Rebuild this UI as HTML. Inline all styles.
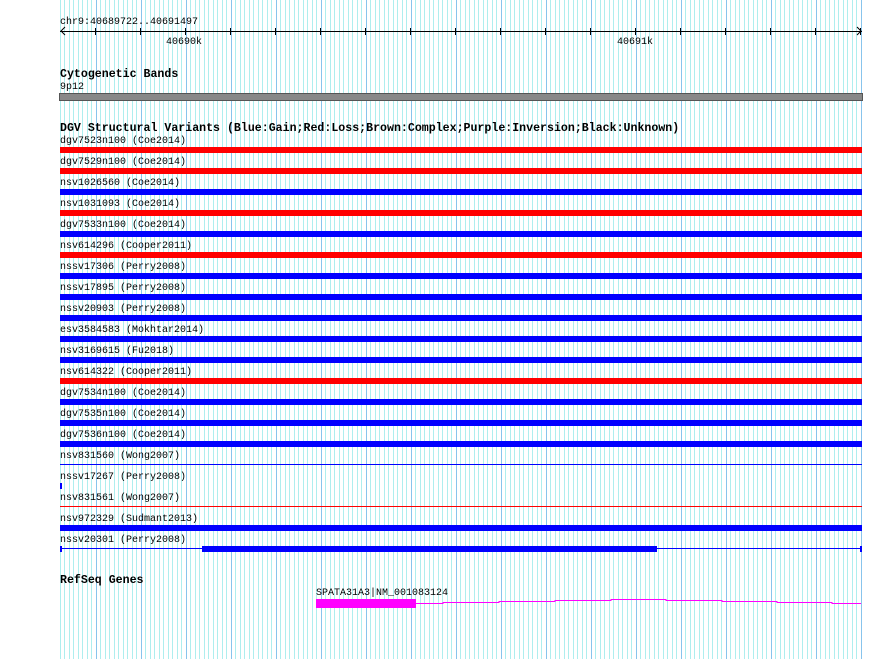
<!DOCTYPE html>
<html><head><meta charset="utf-8"><style>
body{margin:0;width:890px;height:659px;background:#fff;position:relative;overflow:hidden;font-family:"Liberation Mono","DejaVu Sans Mono",monospace;}
.t{position:absolute;font-size:10px;line-height:12px;color:#000;white-space:pre;}
.h{position:absolute;font-size:11.6px;line-height:12px;font-weight:bold;color:#000;white-space:pre;}
.b{position:absolute;left:60px;width:802px;height:6px;}
svg{position:absolute;left:0;top:0;}
</style></head><body>
<svg id="g" width="890" height="659"></svg>
<div class="t" style="left:60px;top:17px">chr9:40689722..40691497</div>
<div class="t" style="left:166px;top:37px">40690k</div>
<div class="t" style="left:617px;top:37px">40691k</div>
<div class="h" style="left:60px;top:69px">Cytogenetic Bands</div>
<div class="t" style="left:60px;top:82px">9p12</div>
<div style="position:absolute;left:59px;top:93px;width:802px;height:6px;background:#888;border:1px solid #555"></div>
<div class="h" style="left:60px;top:123px">DGV Structural Variants (Blue:Gain;Red:Loss;Brown:Complex;Purple:Inversion;Black:Unknown)</div>
<div id="rows"></div>
<div class="h" style="left:60px;top:575px">RefSeq Genes</div>
<div class="t" style="left:316px;top:588px">SPATA31A3|NM_001083124</div>
<div style="position:absolute;left:316px;top:599px;width:100px;height:9px;background:#f0f"></div>
<svg width="890" height="659"><polyline fill="none" stroke="#f0f" stroke-width="1" points="415,603.5 443,603.5 443,602.5 499,602.5 499,601.5 555,601.5 555,600.5 611,600.5 611,599.5 666,599.5 666,600.5 722,600.5 722,601.5 777,601.5 777,602.5 832,602.5 832,603.5 861,603.5"/></svg>
<script>
var s=document.getElementById('g'),h='';
for(var k=0;k<=178;k++){var x=Math.round(59.5+4.5*k);var maj=(k-8)%10==0&&k>=8;
h+='<rect x="'+x+'" y="0" width="1" height="659" fill="'+(maj?'#88c4ec':'#aeeeee')+'"/>';}
h+='<rect x="60" y="31" width="802" height="1" fill="#000"/>';
h+='<polyline points="65,27 61,31 65,35" fill="none" stroke="#000"/><polyline points="857,27 861,31 857,35" fill="none" stroke="#000"/>';
for(var k=0;k<18;k++){var x=95+45*k;h+='<rect x="'+x+'" y="28" width="1" height="7" fill="#000"/>';}
s.innerHTML=h;
var R=[["dgv7523n100 (Coe2014)","r"],["dgv7529n100 (Coe2014)","r"],["nsv1026560 (Coe2014)","b"],["nsv1031093 (Coe2014)","r"],["dgv7533n100 (Coe2014)","b"],["nsv614296 (Cooper2011)","r"],["nssv17306 (Perry2008)","b"],["nssv17895 (Perry2008)","b"],["nssv20903 (Perry2008)","b"],["esv3584583 (Mokhtar2014)","b"],["nsv3169615 (Fu2018)","b"],["nsv614322 (Cooper2011)","r"],["dgv7534n100 (Coe2014)","b"],["dgv7535n100 (Coe2014)","b"],["dgv7536n100 (Coe2014)","b"],["nsv831560 (Wong2007)","tb"],["nssv17267 (Perry2008)","dot"],["nsv831561 (Wong2007)","tr"],["nsv972329 (Sudmant2013)","b"],["nssv20301 (Perry2008)","mix"]];
var o='';
R.forEach(function(r,i){var y=147+21*i;o+='<div class="t" style="left:60px;top:'+(y-11)+'px">'+r[0]+'</div>';
var c=r[1];
if(c=='r')o+='<div class="b" style="top:'+y+'px;background:#f00"></div>';
else if(c=='b')o+='<div class="b" style="top:'+y+'px;background:#00f"></div>';
else if(c=='tb')o+='<div class="b" style="top:'+(y+2)+'px;height:1px;background:#00f"></div>';
else if(c=='tr')o+='<div class="b" style="top:'+(y+2)+'px;height:1px;background:#f00"></div>';
else if(c=='dot')o+='<div style="position:absolute;left:60px;top:'+y+'px;width:2px;height:6px;background:#00f"></div>';
else{o+='<div class="b" style="top:'+(y+2)+'px;height:1px;background:#00f"></div><div style="position:absolute;left:60px;top:'+y+'px;width:2px;height:6px;background:#00f"></div><div style="position:absolute;left:860px;top:'+y+'px;width:2px;height:6px;background:#00f"></div><div style="position:absolute;left:202px;top:'+y+'px;width:455px;height:6px;background:#00f"></div>';}
});
document.getElementById('rows').innerHTML=o;
</script>
</body></html>
